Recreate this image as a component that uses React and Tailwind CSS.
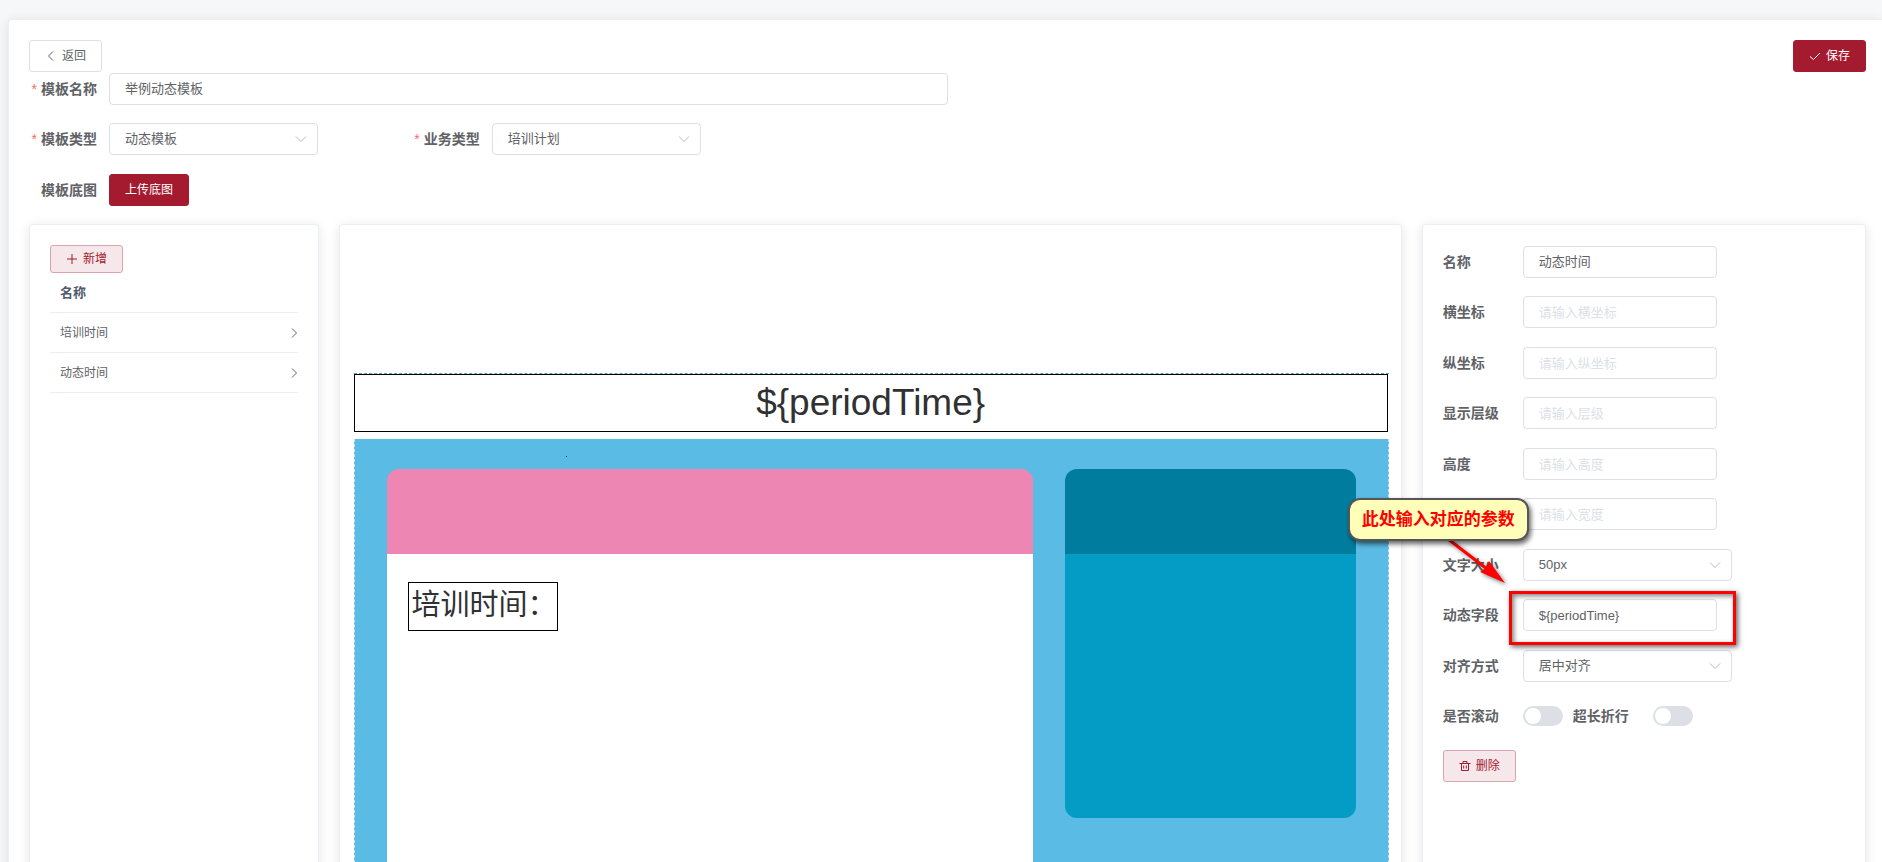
import React, { useState } from 'react';

const Icon = ({ d, size = 12, className = '' }) => (
  <svg viewBox="0 0 12 12" width={size} height={size} fill="none" stroke="currentColor" className={`shrink-0 ${className}`} aria-hidden="true">
    <path d={d} />
  </svg>
);

const icons = {
  left: 'M8 1.5 L3.5 6 L8 10.5',
  right: 'M6 1.5 L10.5 6 L6 10.5',
  down: 'M1 3.5 L6 8.5 L11 3.5',
  check: 'M1 6.5 L4.5 9.5 L11 3',
  plus: 'M6 1 V11 M1 6 H11',
  trash: 'M0.5 3.5 H11.5 M4 3.5 V1.5 H8 V3.5 M2.5 3.5 V10.5 H9.5 V3.5 M4.7 5.5 V8.5 M7.3 5.5 V8.5',
};

const buttonStyles = {
  plain: 'border-[#dcdfe6] bg-white text-[#606266]',
  primary: 'border-[#a41b30] bg-[#a41b30] text-white',
  soft: 'border-[#dba4ac] bg-[#f6e8ea] text-[#a41b30]',
};

const Button = ({ kind, icon, small, children }) => (
  <button
    type="button"
    className={`flex shrink-0 cursor-pointer items-center gap-[5px] rounded-[3px] border px-[15px] text-xs whitespace-nowrap ${small ? 'h-7' : 'h-8'} ${buttonStyles[kind]}`}
  >
    {icon && <Icon d={icons[icon]} />}
    <span>{children}</span>
  </button>
);

const fieldClass = 'h-8 w-full rounded border border-[#dcdfe6] bg-white px-[15px] text-[13px] text-[#606266] outline-none placeholder:text-[#dcdfe6]';

const Select = ({ id, options }) => {
  const [value, setValue] = useState(options[0]);
  return (
    <div className="relative w-[209px]">
      <select id={id} value={value} onChange={(e) => setValue(e.target.value)} className={`${fieldClass} appearance-none`}>
        {options.map((o) => <option key={o}>{o}</option>)}
      </select>
      <Icon d={icons.down} className="pointer-events-none absolute top-[10px] right-[11px] text-[#b4b8bf]" />
    </div>
  );
};

const Switch = ({ id }) => (
  <input
    id={id}
    type="checkbox"
    role="switch"
    className="h-5 w-10 shrink-0 cursor-pointer appearance-none rounded-full bg-[#dcdfe6] p-0.5 before:block before:size-4 before:rounded-full before:bg-white checked:bg-[#a41b30] checked:before:ml-5"
  />
);

const TopItem = ({ id, label, required, children }) => (
  <div className="flex">
    <label htmlFor={id} className="w-20 shrink-0 pr-3 text-right text-sm/8 font-bold whitespace-nowrap text-[#606266]">
      {required && <span className="mr-1 font-normal text-[#f56c6c]">*</span>}
      {label}
    </label>
    {children}
  </div>
);

const SideItem = ({ id, label, children }) => (
  <div className="relative flex h-8 items-center even:h-[33px] even:items-start">
    <label htmlFor={id} className="w-20 shrink-0 text-sm/8 font-bold text-[#606266]">{label}</label>
    {children}
  </div>
);

const Annotation = () => (
  <div className="pointer-events-none absolute top-0 left-0 z-10">
    <div className="absolute -top-2 left-[66px] h-[54px] w-[227px] border-3 border-[#ff0000] shadow-[2px_2px_5px_rgba(0,0,0,0.6),inset_2px_2px_5px_rgba(0,0,0,0.5)]" />
    <svg width="80" height="60" viewBox="0 0 80 60" className="absolute -top-16 left-0 overflow-visible drop-shadow-[2px_2px_2px_rgba(0,0,0,0.5)]" aria-hidden="true">
      <path d="M5 4 L44 34" stroke="#ff0000" strokeWidth="3" />
      <path d="M62 48 L37 37 L43 33 L46 26 Z" fill="#ff0000" />
    </svg>
    <div className="absolute -top-[101px] -left-[95px] flex h-[43px] w-[181px] items-center justify-center rounded-xl border-2 border-[#555] bg-[#ffffb9] text-[17px] font-bold whitespace-nowrap text-[#ff0000] shadow-[2px_3px_5px_rgba(0,0,0,0.6)]">
      此处输入对应的参数
    </div>
  </div>
);

const panelClass = 'rounded border border-[#ebeef5] bg-white shadow-[0_2px_12px_rgba(0,0,0,0.1)]';

const inputs = [
  { id: 'pos-x', label: '横坐标', placeholder: '请输入横坐标' },
  { id: 'pos-y', label: '纵坐标', placeholder: '请输入纵坐标' },
  { id: 'level', label: '显示层级', placeholder: '请输入层级' },
  { id: 'height', label: '高度', placeholder: '请输入高度' },
  { id: 'width', label: '', placeholder: '请输入宽度' },
];

const ElementList = () => (
  <section className={`col-span-4 p-5 ${panelClass}`}>
    <div className="flex">
      <Button kind="soft" icon="plus" small>新增</Button>
    </div>
    <table className="w-full border-separate border-spacing-0 text-left text-[#606266]">
      <thead>
        <tr>
          <th className="h-10 border-b border-[#ebeef5] px-[10px] text-[13px] font-bold text-[#515a6e]" colSpan={2}>名称</th>
        </tr>
      </thead>
      <tbody>
        {['培训时间', '动态时间'].map((name) => (
          <tr key={name}>
            <td className="h-10 border-b border-[#ebeef5] px-[10px] text-xs">{name}</td>
            <td className="h-10 w-3 border-b border-[#ebeef5]"><Icon d={icons.right} /></td>
          </tr>
        ))}
      </tbody>
    </table>
  </section>
);

const Canvas = () => (
  <section className={`col-span-14 pt-[148px] pr-3 pl-[14px] ${panelClass}`}>
    <div className="relative">
      <div className="border-t border-dashed border-[#5b9fc0]">
        <div className="mr-px flex h-[58px] items-center justify-center border border-black text-[37px] text-[#303133]">
          {'${periodTime}'}
        </div>
      </div>
      <div className="mt-[7px] flex h-[900px] gap-8 border-x border-dashed border-[#d5dde2] bg-[#5abbe5] px-8 pt-[30px]">
        <div className="flex flex-[646] flex-col">
          <div className="h-[85px] rounded-t-xl bg-[#ee86b4]" />
          <div className="flex-1 bg-white px-[21px] pt-7">
            <div className="flex h-[49px] w-[150px] items-center border border-black px-[3px] pb-0.5 text-[29px] whitespace-nowrap text-[#303133]">
              培训时间：
            </div>
          </div>
        </div>
        <div className="flex-[291]">
          <div className="h-[85px] rounded-t-xl bg-[#007d9e]" />
          <div className="h-[264px] rounded-b-xl bg-[#049cc5]" />
        </div>
      </div>
      <i className="absolute top-[83px] left-[212px] size-px bg-[#303133]" />
      <i className="absolute top-[35px] left-[447px] size-px bg-[#303133]" />
    </div>
  </section>
);

const Properties = () => (
  <section className={`col-span-6 px-5 pt-[21px] ${panelClass}`}>
    <div className="flex flex-col gap-[18px]">
      <SideItem id="name" label="名称">
        <div className="w-[194px]"><input id="name" defaultValue="动态时间" className={`${fieldClass} pb-1`} /></div>
      </SideItem>
      {inputs.map((f) => (
        <SideItem key={f.id} id={f.id} label={f.label}>
          <div className="w-[194px]"><input id={f.id} placeholder={f.placeholder} aria-label={f.placeholder} className={fieldClass} /></div>
        </SideItem>
      ))}
      <SideItem id="font-size" label="文字大小">
        <Select id="font-size" options={['50px', '40px', '30px']} />
      </SideItem>
      <SideItem id="field" label="动态字段">
        <div className="w-[194px]"><input id="field" defaultValue="${periodTime}" className={fieldClass} /></div>
        <Annotation />
      </SideItem>
      <SideItem id="align" label="对齐方式">
        <Select id="align" options={['居中对齐', '左对齐', '右对齐']} />
      </SideItem>
      <div className="flex h-8 items-center">
        <label htmlFor="scroll" className="w-20 text-sm/8 font-bold text-[#606266]">是否滚动</label>
        <Switch id="scroll" />
        <label htmlFor="wrap" className="ml-[10px] w-20 text-sm/8 font-bold text-[#606266]">超长折行</label>
        <Switch id="wrap" />
      </div>
      <div className="flex">
        <Button kind="soft" icon="trash">删除</Button>
      </div>
    </div>
  </section>
);

export default function App() {
  return (
    <div className="h-screen overflow-hidden bg-[#f6f7f9] pt-[19px] pl-2 font-['Liberation_Sans','Noto_Sans_CJK_SC',sans-serif]">
      <main className="rounded-tl border-t border-l border-[#ebeef5] bg-white py-5 pr-4 pl-5 shadow-[0_2px_12px_rgba(0,0,0,0.1)]">
        <header className="flex justify-between">
          <Button kind="plain" icon="left">返回</Button>
          <Button kind="primary" icon="check">保存</Button>
        </header>

        <form className="mt-px">
          <div className="mb-[18px] w-1/2">
            <TopItem id="tpl-name" label="模板名称" required>
              <input id="tpl-name" defaultValue="举例动态模板" className={`${fieldClass} pb-1`} />
            </TopItem>
          </div>
          <div className="mb-[19px] grid grid-cols-24">
            <div className="col-span-5">
              <TopItem id="tpl-type" label="模板类型" required>
                <Select id="tpl-type" options={['动态模板', '静态模板']} />
              </TopItem>
            </div>
            <div className="col-span-5">
              <TopItem id="biz-type" label="业务类型" required>
                <Select id="biz-type" options={['培训计划', '培训班']} />
              </TopItem>
            </div>
          </div>
          <div className="mb-[18px] flex">
            <span className="w-20 shrink-0 pr-3 text-right text-sm/8 font-bold whitespace-nowrap text-[#606266]">模板底图</span>
            <Button kind="primary">上传底图</Button>
          </div>
        </form>

        <div className="grid grid-cols-24 gap-5">
          <ElementList />
          <Canvas />
          <Properties />
        </div>
      </main>
    </div>
  );
}
